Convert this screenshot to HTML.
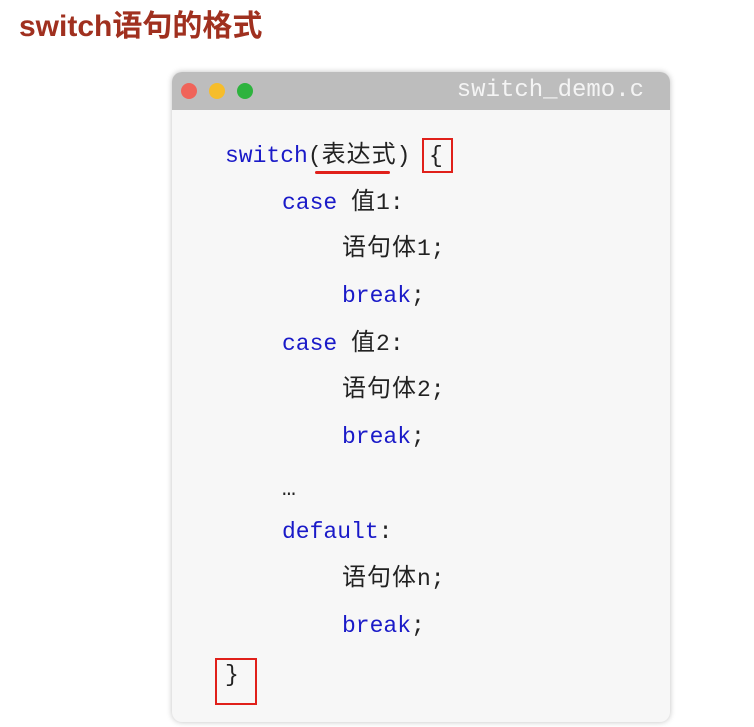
<!DOCTYPE html>
<html><head><meta charset="utf-8"><style>
body{margin:0;width:754px;height:727px;background:#fff;position:relative;overflow:hidden;font-family:"Liberation Sans","Noto Sans CJK SC",sans-serif}
h1{position:absolute;left:19px;top:1px;margin:0;font-size:30px;color:#a0301f;font-weight:bold;letter-spacing:0}
.win{position:absolute;left:172px;top:72px;width:498px;height:650px;background:#f7f7f7;border-radius:10px;box-shadow:0 0 6px rgba(0,0,0,.25);overflow:hidden}
.bar{height:38px;background:#bdbdbd;position:relative}
.dot{position:absolute;top:11px;width:16px;height:16px;border-radius:50%}
.fn{position:absolute;right:26px;top:5px;font:24px "Liberation Mono",monospace;color:#f4f4f4}
.l{position:absolute;font:23px "Liberation Mono","Noto Sans CJK SC",monospace;color:#222;line-height:30px;white-space:pre}
.c{font-size:24px;letter-spacing:1px}
.k{color:#1a1ac8}
.box{position:absolute;border:2.5px solid #e0201a}
</style></head><body>
<h1>switch语句的格式</h1>
<div class="win">
<div class="bar">
<div class="dot" style="left:9px;background:#f0645a"></div>
<div class="dot" style="left:37px;background:#f6bd2b"></div>
<div class="dot" style="left:65px;background:#2eb33e"></div>
<div class="fn">switch_demo.c</div>
</div>
</div>
<div class="l" style="left:225px;top:141px"><span class="k">switch</span>(<span class="c">表达式</span>)</div>
<div class="l" style="left:429px;top:141px">{</div>
<div class="l" style="left:282px;top:188px"><span class="k">case</span> <span class="c">值</span>1:</div>
<div class="l" style="left:342px;top:234px"><span class="c">语句体</span>1;</div>
<div class="l" style="left:342px;top:281px"><span class="k">break</span>;</div>
<div class="l" style="left:282px;top:329px"><span class="k">case</span> <span class="c">值</span>2:</div>
<div class="l" style="left:342px;top:375px"><span class="c">语句体</span>2;</div>
<div class="l" style="left:342px;top:422px"><span class="k">break</span>;</div>
<div class="l" style="left:282px;top:474px">…</div>
<div class="l" style="left:282px;top:517px"><span class="k">default</span>:</div>
<div class="l" style="left:342px;top:564px"><span class="c">语句体</span>n;</div>
<div class="l" style="left:342px;top:611px"><span class="k">break</span>;</div>
<div class="l" style="left:225px;top:660px">}</div>
<div class="box" style="left:422px;top:138px;width:27px;height:31px"></div>
<div style="position:absolute;left:315px;top:171px;width:75px;height:3px;background:#e0201a;border-radius:2px"></div>
<div class="box" style="left:215px;top:658px;width:38px;height:43px"></div>
</body></html>
